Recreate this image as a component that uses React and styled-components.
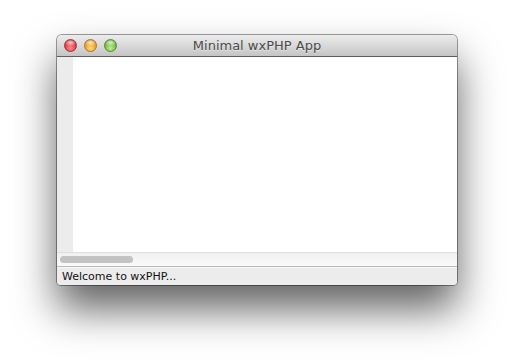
import styled, { createGlobalStyle } from 'styled-components';

const Global = createGlobalStyle`
  html, body {
    margin: 0;
    background: #ffffff;
  }
`;

const Page = styled.div`
  width: 514px;
  height: 364px;
  box-sizing: border-box;
  padding: 35px 0 0 57px;
  overflow: hidden;
`;

const Window = styled.div`
  width: 400px;
  display: flex;
  flex-direction: column;
  border-radius: 5px 5px 4px 4px;
  overflow: hidden;
  box-shadow: 0 0 0 1px rgba(0, 0, 0, 0.38), 0 24px 42px rgba(0, 0, 0, 0.62);
  font-family: "DejaVu Sans", "Liberation Sans", sans-serif;
`;

const TitleBar = styled.div`
  height: 21px;
  position: relative;
  display: flex;
  align-items: center;
  padding-left: 7px;
  gap: 7px;
  background: linear-gradient(to bottom, #ececec 0%, #d9d9d9 50%, #c4c4c4 100%);
  border-bottom: 1px solid #5e5e5e;
`;

const Light = styled.span`
  width: 13px;
  height: 13px;
  border-radius: 50%;
  box-sizing: border-box;
  border: 1px solid ${p => p.$edge};
  background:
    radial-gradient(ellipse 60% 35% at 50% 22%, rgba(255, 255, 255, 0.75), rgba(255, 255, 255, 0) 100%),
    radial-gradient(circle at 50% 75%, ${p => p.$light} 0%, ${p => p.$base} 55%, ${p => p.$dark} 100%);
`;

const Title = styled.div`
  position: absolute;
  left: 0;
  right: 0;
  top: 0;
  bottom: 0;
  display: flex;
  align-items: center;
  justify-content: center;
  font-size: 13px;
  color: #4a4a4a;
  text-shadow: 0 1px 0 rgba(255, 255, 255, 0.5);
  pointer-events: none;
`;

const Body = styled.div`
  height: 195px;
  display: flex;
  background: #ffffff;
`;

const Gutter = styled.div`
  width: 16px;
  background: #ececec;
`;

const ScrollBar = styled.div`
  height: 13px;
  border-top: 1px solid #dedede;
  border-bottom: 1px solid #b9b9b9;
  background: linear-gradient(to bottom, #f0f0f0, #fafafa);
  display: flex;
  align-items: center;
  padding-left: 3px;
`;

const Thumb = styled.div`
  width: 73px;
  height: 7px;
  border-radius: 4px;
  background: #c3c3c3;
`;

const StatusBar = styled.div`
  height: 17px;
  background: #ececec;
  border-top: 1px solid #fafafa;
  display: flex;
  align-items: center;
  padding-left: 5px;
  font-size: 11px;
  color: #111111;
`;

export default function App() {
  return (
    <Page>
      <Global />
      <Window>
        <TitleBar>
          <Light $base="#e63a44" $light="#ff8a90" $dark="#a81822" $edge="#9a2e34" />
          <Light $base="#f0a224" $light="#ffd880" $dark="#b8700c" $edge="#a07428" />
          <Light $base="#74bf3c" $light="#c0ec98" $dark="#448a1e" $edge="#548636" />
          <Title>Minimal wxPHP App</Title>
        </TitleBar>
        <Body>
          <Gutter />
        </Body>
        <ScrollBar>
          <Thumb />
        </ScrollBar>
        <StatusBar>Welcome to wxPHP...</StatusBar>
      </Window>
    </Page>
  );
}
